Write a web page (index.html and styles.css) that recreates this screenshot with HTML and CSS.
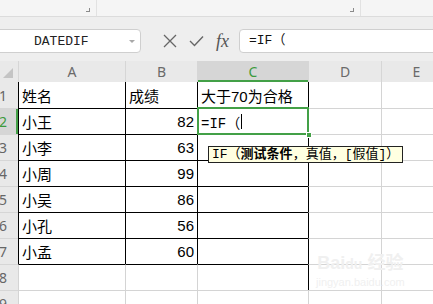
FILE: index.html
```html
<!DOCTYPE html>
<html lang="zh-CN">
<head>
    <meta charset="UTF-8">
    <title>IF 函数</title>
    <link rel="stylesheet" href="styles.css">
</head>
<body>
    <div class="ribbon">
        <div class="group g1"><span class="mark"></span></div>
        <div class="group g2"><span class="mark"></span></div>
        <div class="group"></div>
    </div>

    <div class="toolbar">
        <div class="name-box">
            <span class="name">DATEDIF</span>
            <span class="arrow"></span>
        </div>
        <div class="tools">
            <svg width="14" height="14" viewBox="0 0 14 14"><path d="M1 1 L13 13 M13 1 L1 13" stroke="#666" stroke-width="1.3" fill="none"/></svg>
            <svg width="15" height="12" viewBox="0 0 15 12"><path d="M1 6 L5.5 10.5 L14 1.5" stroke="#666" stroke-width="1.4" fill="none"/></svg>
            <span class="fx">fx</span>
        </div>
        <div class="formula">=IF（</div>
    </div>

    <div class="sheet">
        <div class="hd corner"><span class="tri"></span></div>
        <div class="hd">A</div>
        <div class="hd">B</div>
        <div class="hd hd-on">C</div>
        <div class="hd">D</div>
        <div class="hd">E</div>

        <div class="rh first">1</div>
        <div class="cell b top">姓名</div>
        <div class="cell b top">成绩</div>
        <div class="cell b top">大于70为合格</div>
        <div class="cell b-left top"></div>
        <div class="cell top"></div>

        <div class="rh rh-on">2</div>
        <div class="cell b">小王</div>
        <div class="cell b num">82</div>
        <div class="cell b active">=IF（<span class="caret"></span></div>
        <div class="cell b-left"></div>
        <div class="cell"></div>

        <div class="rh">3</div>
        <div class="cell b">小李</div>
        <div class="cell b num">63</div>
        <div class="cell b"></div>
        <div class="cell b-left"></div>
        <div class="cell"></div>

        <div class="rh">4</div>
        <div class="cell b">小周</div>
        <div class="cell b num">99</div>
        <div class="cell b"></div>
        <div class="cell b-left"></div>
        <div class="cell"></div>

        <div class="rh">5</div>
        <div class="cell b">小吴</div>
        <div class="cell b num">86</div>
        <div class="cell b"></div>
        <div class="cell b-left"></div>
        <div class="cell"></div>

        <div class="rh">6</div>
        <div class="cell b">小孔</div>
        <div class="cell b num">56</div>
        <div class="cell b"></div>
        <div class="cell b-left"></div>
        <div class="cell"></div>

        <div class="rh">7</div>
        <div class="cell b">小孟</div>
        <div class="cell b num">60</div>
        <div class="cell b"></div>
        <div class="cell b-left"></div>
        <div class="cell"></div>

        <div class="rh">8</div>
        <div class="cell b-top b-l"></div>
        <div class="cell b-top b-l"></div>
        <div class="cell b-top b-l"></div>
        <div class="cell b-left"></div>
        <div class="cell"></div>

        <div class="rh">9</div>
        <div class="cell"></div>
        <div class="cell"></div>
        <div class="cell"></div>
        <div class="cell"></div>
        <div class="cell"></div>

        <div class="tip">IF（<b>测试条件</b>，真值，[假值]）</div>
    </div>

    <div class="watermark">
        <div class="wm-logo">Bai<span class="paw">du</span> 经验</div>
        <div class="wm-url">jingyan.baidu.com</div>
    </div>
</body>
</html>
```

FILE: styles.css
```css
body {
    margin: 0;
    width: 433px;
    height: 304px;
    overflow: hidden;
    background: #eeeeee;
    font-family: "Liberation Sans", "Noto Sans CJK SC", sans-serif;
    position: relative;
}
.ribbon {
    display: flex;
    height: 16px;
    background: #f5f5f5;
    border-bottom: 1px solid #dcdcdc;
}
.group {
    display: flex;
    justify-content: flex-end;
    align-items: flex-end;
    padding: 0 6px 4px 0;
}
.group.g1 {
    width: 90px;
    border-right: 1px solid #e2e2e2;
}
.group.g2 {
    width: 257px;
    border-right: 1px solid #e2e2e2;
}
.mark {
    width: 3px;
    height: 3px;
    border-right: 1px solid #8a8a8a;
    border-bottom: 1px solid #8a8a8a;
}
.toolbar {
    display: flex;
    align-items: center;
    height: 44px;
    padding-top: 12px;
    box-sizing: border-box;
    padding-bottom: 8px;
}
.name-box {
    display: flex;
    align-items: center;
    width: 147px;
    height: 24px;
    margin-left: -6px;
    box-sizing: border-box;
    background: #fff;
    border: 1px solid #cfcfcf;
    border-radius: 4px;
}
.name {
    font-family: "Liberation Mono", monospace;
    font-size: 13px;
    color: #222;
    margin-left: 39px;
}
.arrow {
    margin-left: auto;
    margin-right: 5px;
    border-left: 3px solid transparent;
    border-right: 3px solid transparent;
    border-top: 3px solid #a8a8a8;
}
.tools {
    display: flex;
    align-items: center;
    gap: 12px;
    margin-left: 22px;
}
.fx {
    font-family: "Liberation Serif", serif;
    font-style: italic;
    font-size: 18px;
    color: #555;
    line-height: 1;
}
.formula {
    flex: 1;
    height: 24px;
    margin-left: 10px;
    margin-right: -10px;
    box-sizing: border-box;
    background: #fff;
    border: 1px solid #cfcfcf;
    border-radius: 4px;
    padding-left: 9px;
    font-family: "Liberation Mono", "Noto Sans CJK SC", monospace;
    font-size: 13px;
    line-height: 22px;
    color: #111;
}
.sheet {
    display: grid;
    grid-template-columns: 30px 107px 72px 111px 73px 70px;
    grid-template-rows: 21px repeat(9, 26px);
    margin-left: -12px;
    background: #fff;
    position: relative;
}
.hd {
    background: #e9e9e9;
    border-left: 1px solid #d6d6d6;
    display: flex;
    align-items: center;
    justify-content: center;
    font-family: "Noto Sans", sans-serif;
    font-size: 14px;
    color: #6a6a6a;
}
.hd.corner {
    border-left: none;
    justify-content: flex-end;
    align-items: flex-end;
    padding: 0 5px 4px 0;
}
.tri {
    width: 0;
    height: 0;
    border-left: 10px solid transparent;
    border-bottom: 10px solid #c4c4c4;
}
.hd-on {
    background: #d6d6d6;
    color: #3c9a3c;
    box-shadow: inset 0 -2px 0 #43a047;
}
.rh {
    background: #e9e9e9;
    border-top: 1px solid #d6d6d6;
    display: flex;
    align-items: center;
    justify-content: center;
    font-family: "Noto Sans", sans-serif;
    font-size: 14px;
    color: #666;
}
.rh.first {
    border-top: none;
}
.rh-on {
    background: #d6d6d6;
    color: #3c9a3c;
    box-shadow: inset -2px 0 0 #43a047;
}
.cell {
    box-sizing: border-box;
    border-left: 1px solid #d4d4d4;
    border-top: 1px solid #d4d4d4;
    display: flex;
    align-items: center;
    padding: 0 3px;
    font-size: 15px;
    color: #000;
    white-space: nowrap;
}
.cell.top {
    border-top: none;
}
.cell.b {
    border-left-color: #000;
    border-top-color: #000;
}
.cell.b-left {
    border-left-color: #000;
}
.cell.b-top {
    border-top-color: #000;
}
.cell.b-l {
    border-left-color: #d4d4d4;
}
.cell.num {
    justify-content: flex-end;
}
.cell.active {
    position: relative;
    font-family: "Liberation Mono", "Noto Sans CJK SC", monospace;
    font-size: 14px;
}
.cell.active::after {
    content: "";
    position: absolute;
    top: -2px;
    left: -1px;
    right: -1px;
    bottom: -1px;
    border: 2px solid #43a047;
}
.cell.active::before {
    content: "";
    position: absolute;
    right: -4px;
    bottom: -4px;
    width: 4px;
    height: 4px;
    background: #43a047;
    border: 1px solid #fff;
    z-index: 1;
}
.caret {
    display: inline-block;
    width: 1px;
    height: 15px;
    background: #000;
    margin-left: 1px;
}
.tip {
    position: absolute;
    left: 220px;
    top: 85px;
    height: 17px;
    box-sizing: border-box;
    padding: 0 3px;
    background: #ffffe1;
    border: 1px solid #222;
    font-family: "Liberation Mono", "Noto Sans CJK SC", monospace;
    font-size: 13px;
    line-height: 15px;
    white-space: nowrap;
}
.tip b {
    font-weight: bold;
}
.watermark {
    position: absolute;
    left: 316px;
    top: 252px;
    color: #f0f0f0;
    text-align: center;
}
.wm-logo {
    font-size: 18px;
    font-weight: bold;
    line-height: 22px;
}
.paw {
    font-size: 14px;
}
.wm-url {
    font-size: 11px;
    line-height: 14px;
}
```
